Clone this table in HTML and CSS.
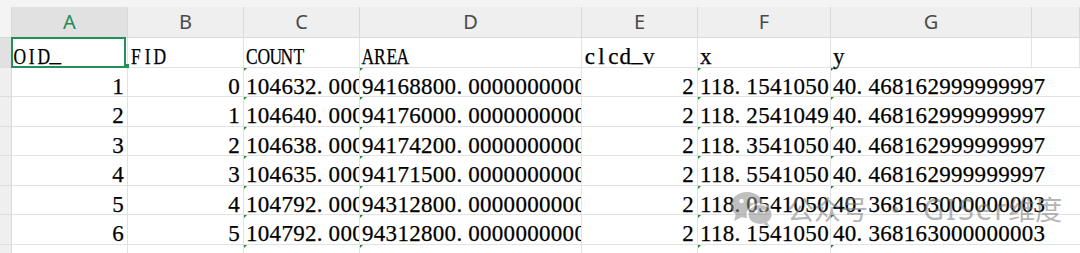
FILE: index.html
```html
<!DOCTYPE html>
<html lang="zh">
<head>
<meta charset="utf-8">
<title>Sheet</title>
<link rel="stylesheet" href="styles.css">
</head>
<body>
<div class="sheet">
  <div class="topbar"></div>
  <div class="grid">
    <div class="corner"></div>
    <div class="ch sel">A</div>
    <div class="ch">B</div>
    <div class="ch">C</div>
    <div class="ch">D</div>
    <div class="ch">E</div>
    <div class="ch">F</div>
    <div class="ch">G</div>
    <div class="ch"></div>

    <div class="rh sel"></div>
    <div class="c a1"><span class="caps"><span class="m">O</span><span class="m">I</span><span class="m">D</span><span class="m u">_</span></span></div>
    <div class="c"><span class="caps"><span class="m">F</span><span class="m">I</span><span class="m">D</span></span></div>
    <div class="c"><span class="caps"><span class="m">C</span><span class="m">O</span><span class="m">U</span><span class="m">N</span><span class="m">T</span></span></div>
    <div class="c"><span class="caps"><span class="m">A</span><span class="m">R</span><span class="m">E</span><span class="m">A</span></span></div>
    <div class="c"><span class="m">c</span><span class="m">l</span><span class="m">c</span><span class="m">d</span><span class="m u">_</span><span class="m">v</span></div>
    <div class="c"><span class="m">x</span></div>
    <div class="c"><span class="m">y</span></div>
    <div class="c"></div>

    <div class="rh"></div>
    <div class="c r">1</div>
    <div class="c r">0</div>
    <div class="c t">104632<span class="d">.</span>000</div>
    <div class="c t">94168800<span class="d">.</span>0000000000</div>
    <div class="c r">2</div>
    <div class="c t">118<span class="d">.</span>1541050</div>
    <div class="c t g">40<span class="d">.</span>468162999999997</div>

    <div class="rh"></div>
    <div class="c r">2</div>
    <div class="c r">1</div>
    <div class="c t">104640<span class="d">.</span>000</div>
    <div class="c t">94176000<span class="d">.</span>0000000000</div>
    <div class="c r">2</div>
    <div class="c t">118<span class="d">.</span>2541049</div>
    <div class="c t g">40<span class="d">.</span>468162999999997</div>

    <div class="rh"></div>
    <div class="c r">3</div>
    <div class="c r">2</div>
    <div class="c t">104638<span class="d">.</span>000</div>
    <div class="c t">94174200<span class="d">.</span>0000000000</div>
    <div class="c r">2</div>
    <div class="c t">118<span class="d">.</span>3541050</div>
    <div class="c t g">40<span class="d">.</span>468162999999997</div>

    <div class="rh"></div>
    <div class="c r">4</div>
    <div class="c r">3</div>
    <div class="c t">104635<span class="d">.</span>000</div>
    <div class="c t">94171500<span class="d">.</span>0000000000</div>
    <div class="c r">2</div>
    <div class="c t">118<span class="d">.</span>5541050</div>
    <div class="c t g">40<span class="d">.</span>468162999999997</div>

    <div class="rh"></div>
    <div class="c r">5</div>
    <div class="c r">4</div>
    <div class="c t">104792<span class="d">.</span>000</div>
    <div class="c t">94312800<span class="d">.</span>0000000000</div>
    <div class="c r">2</div>
    <div class="c t">118<span class="d">.</span>0541050</div>
    <div class="c t g">40<span class="d">.</span>368163000000003</div>

    <div class="rh"></div>
    <div class="c r">6</div>
    <div class="c r">5</div>
    <div class="c t">104792<span class="d">.</span>000</div>
    <div class="c t">94312800<span class="d">.</span>0000000000</div>
    <div class="c r">2</div>
    <div class="c t">118<span class="d">.</span>1541050</div>
    <div class="c t g">40<span class="d">.</span>368163000000003</div>

    <div class="rh"></div>
    <div class="c r">7</div>
    <div class="c r">6</div>
    <div class="c t">104793<span class="d">.</span>000</div>
    <div class="c t">94313700<span class="d">.</span>0000000000</div>
    <div class="c r">2</div>
    <div class="c t">118<span class="d">.</span>2541049</div>
    <div class="c t g">40<span class="d">.</span>368163000000003</div>
  </div>

  <div class="wm">
    <svg class="wm-logo" width="44" height="38" viewBox="0 0 44 38">
      <ellipse cx="17" cy="15" rx="16" ry="13" fill="#8c8c8c"/>
      <path d="M6 24 L4 31 L12 27 Z" fill="#8c8c8c"/>
      <circle cx="11.5" cy="11" r="2.2" fill="#fff"/>
      <circle cx="22" cy="11" r="2.2" fill="#fff"/>
      <ellipse cx="30" cy="24.5" rx="12.5" ry="10.5" fill="#8c8c8c" stroke="#fff" stroke-width="2"/>
      <path d="M37 32 L40 37 L33 34 Z" fill="#8c8c8c"/>
      <circle cx="26" cy="21.5" r="1.8" fill="#fff"/>
      <circle cx="34" cy="21.5" r="1.8" fill="#fff"/>
    </svg>
    <span class="wm-cn">公众号</span>
    <span class="wm-dot">·</span>
    <span class="wm-en">GISer</span><span class="wm-cn2">维度</span>
  </div>
</div>
</body>
</html>
```

FILE: styles.css
```css
* { box-sizing: border-box; }

html, body {
  margin: 0;
  padding: 0;
  background: #ffffff;
}

body {
  width: 1080px;
  height: 253px;
  overflow: hidden;
}

.sheet {
  position: relative;
  width: 1080px;
  height: 253px;
  overflow: hidden;
}

.topbar {
  height: 7px;
  background: #f4f4f4;
}

.grid {
  display: grid;
  grid-template-columns: 12px 116px 116px 116px 222px 116px 133px 201px 1fr;
  grid-template-rows: 31px repeat(8, 29.5px);
}

.corner {
  background: #f4f4f4;
  border-right: 1px solid #dadada;
  border-bottom: 1px solid #dadada;
}

.ch {
  background: #efefef;
  border-right: 1px solid #dadada;
  border-bottom: 1px solid #dadada;
  font-family: "Noto Sans", "Liberation Sans", sans-serif;
  font-size: 20px;
  line-height: 30px;
  color: #4a4a4a;
  text-align: center;
}

.ch.sel {
  background: #e1e1e1;
  color: #1f8a55;
}

.rh {
  background: #efefef;
  border-right: 1px solid #dadada;
  border-bottom: 1px solid #dddddd;
}

.rh.sel {
  background: #e1e1e1;
}

.c {
  position: relative;
  border-right: 1px solid #e2e2e2;
  border-bottom: 1px solid #e2e2e2;
  font-family: "Liberation Serif", "Times New Roman", serif;
  font-size: 23px;
  letter-spacing: 0.3px;
  line-height: 23px;
  padding: 7px 3px 0 2px;
  color: #000;
  -webkit-text-stroke: 0.25px #000;
  white-space: nowrap;
  overflow-x: clip;
  overflow-y: visible;
}

.c.r {
  text-align: right;
}

.c.g {
  grid-column: span 2;
  border-right: none;
}

.d {
  display: inline-block;
  width: 11.8px;
}

.m {
  display: inline-flex;
  justify-content: center;
  width: 11.8px;
}

.m.u {
  transform: translateY(-3px);
}

.caps .m {
  transform: scaleX(0.76);
}

.caps .m.u {
  transform: translateY(-3px);
}

.c.t::before {
  content: "";
  position: absolute;
  left: -1px;
  top: 0;
  width: 0;
  height: 0;
  border-top: 4px solid #1c8a2c;
  border-right: 4px solid transparent;
}

.c.a1 {
  z-index: 2;
  overflow: visible;
}

.c.a1::after {
  content: "";
  position: absolute;
  left: -1px;
  top: -1px;
  right: 1px;
  bottom: -1px;
  border: 2px solid #219158;
}

.c.a1::before {
  content: "";
  position: absolute;
  right: -2px;
  bottom: -1.5px;
  width: 4px;
  height: 4px;
  background: #219158;
  z-index: 3;
}

.wm {
  position: absolute;
  left: 730px;
  top: 190px;
  display: flex;
  align-items: center;
  opacity: 0.55;
  color: #7a7a7a;
  font-family: "Noto Sans CJK SC", "Noto Sans", sans-serif;
  font-size: 27px;
  line-height: 38px;
}

.wm-logo {
  margin-right: 13px;
}

.wm-dot {
  margin: 0 14px;
}

.wm-en {
  font-family: "Noto Sans", sans-serif;
  font-size: 29px;
  letter-spacing: 2px;
}
```
